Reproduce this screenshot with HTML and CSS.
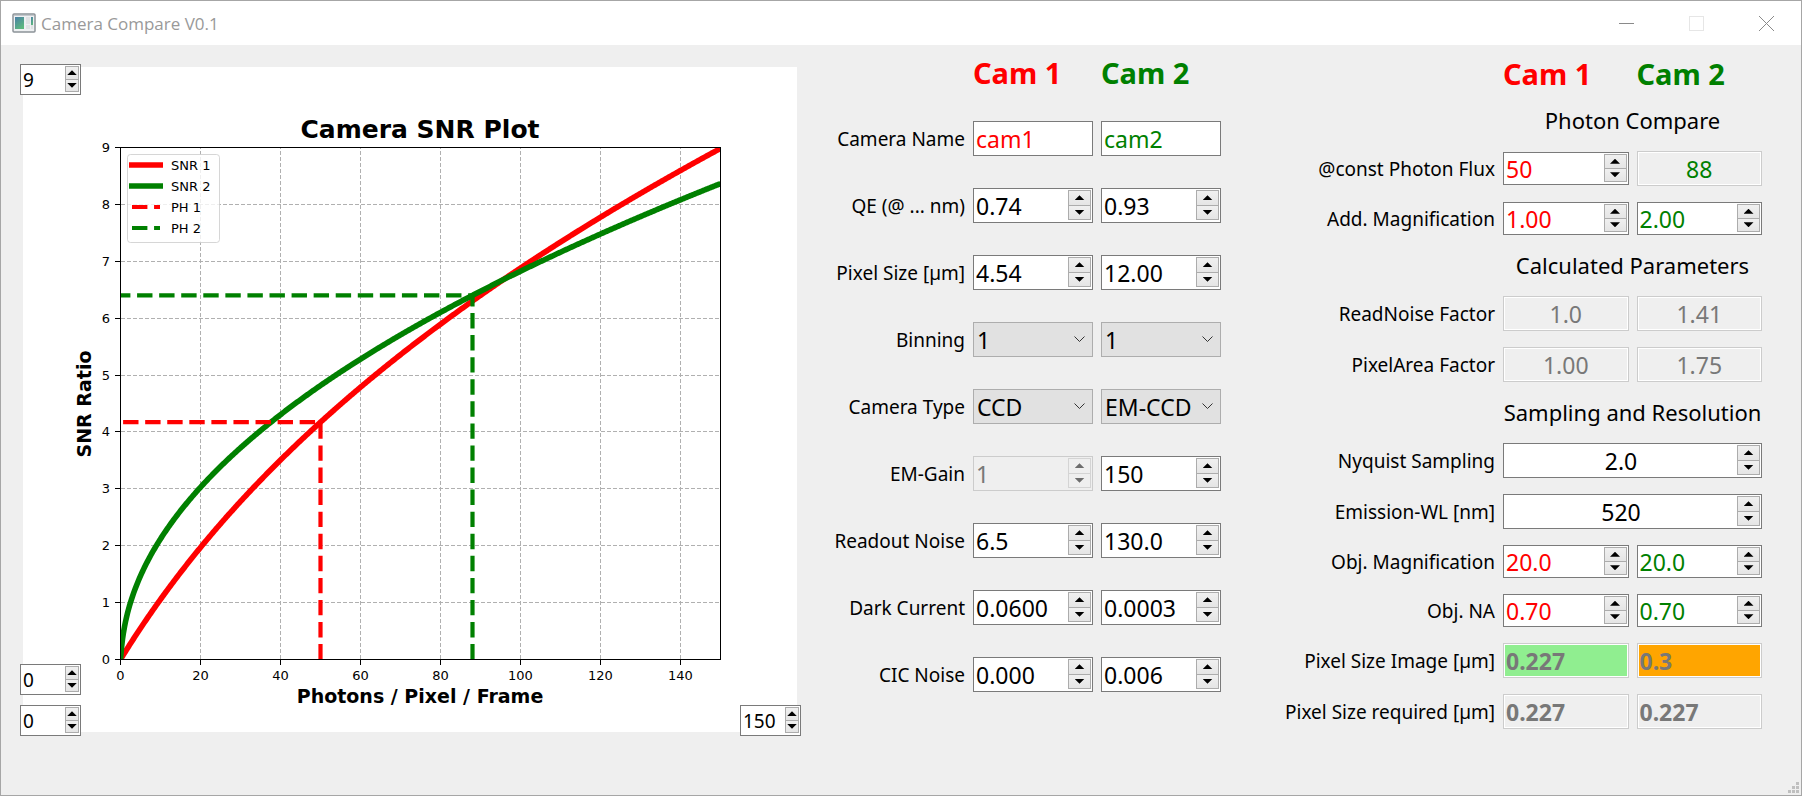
FILE: index.html
```html
<!DOCTYPE html>
<html lang="en">
<head>
<meta charset="utf-8">
<title>Camera Compare V0.1</title>
<link rel="stylesheet" href="styles.css">
</head>
<body>
<div class="window">
  <header class="titlebar">
    <svg class="app-icon" width="24" height="20" viewBox="0 0 24 20" aria-hidden="true">
      <defs><linearGradient id="pane" x1="0" y1="0" x2="0.6" y2="1"><stop offset="0" stop-color="#4a7fa8"/><stop offset="1" stop-color="#5cb87e"/></linearGradient></defs>
      <rect x="1" y="1" width="22" height="18" rx="1" fill="#eef0f2" stroke="#8c9298" stroke-width="1.5"/>
      <path d="M2 2.5h20" stroke="#c3c8cd"/>
      <rect x="3" y="4" width="9" height="12" fill="url(#pane)"/>
      <path d="M14 4h4v7h-4zM14 12h4v4h-4zM19 12h2v4h-2z" fill="#e0e2e4"/>
      <rect x="19" y="4" width="2" height="8" fill="url(#pane)"/>
    </svg>
    <h1 class="title">Camera Compare V0.1</h1>
    <div class="window-buttons">
      <button type="button" aria-label="Minimize"><svg width="15" height="15" viewBox="0 0 15 15"><path d="M0 7.5h15" stroke="#8a8a8a"/></svg></button>
      <button type="button" aria-label="Maximize" disabled><svg width="15" height="15" viewBox="0 0 15 15"><rect x="0.5" y="0.5" width="14" height="14" fill="none" stroke="#e6e6e6"/></svg></button>
      <button type="button" aria-label="Close"><svg width="15" height="15" viewBox="0 0 15 15"><path d="M0 0l15 15M15 0L0 15" stroke="#8a8a8a"/></svg></button>
    </div>
  </header>

  <main class="content">
    <section class="plot" aria-label="Camera SNR Plot">
      <svg class="chart" viewBox="0 0 774 665" role="img" aria-label="SNR ratio over photons per pixel per frame">
        <text class="chart-title" x="397" y="71">Camera SNR Plot</text>
        <g id="grid" class="grid"></g>
        <clipPath id="area"><rect x="98" y="81" width="600" height="512"/></clipPath>
        <g id="curves" clip-path="url(#area)"></g>
        <rect x="97.5" y="80.5" width="600" height="512" fill="none" stroke="#000"/>
        <g id="ticks" class="ticks"></g>
        <text class="axis-title" x="397" y="636">Photons / Pixel / Frame</text>
        <text class="axis-title" transform="translate(68 337) rotate(-90)">SNR Ratio</text>
        <g class="legend">
          <rect x="104.5" y="87.5" width="92" height="88" rx="3" fill="#fff" fill-opacity="0.8" stroke="#ccc" stroke-opacity="0.8"/>
          <path class="snr cam1-line" d="M106 98h34"/>
          <path class="snr cam2-line" d="M106 119h34"/>
          <path class="ph cam1-line" d="M109 140h28"/>
          <path class="ph cam2-line" d="M109 161h28"/>
          <text x="148" y="103">SNR 1</text>
          <text x="148" y="124">SNR 2</text>
          <text x="148" y="145">PH 1</text>
          <text x="148" y="166">PH 2</text>
        </g>
      </svg>
      <div class="spin small y-max"><input type="text" value="9" aria-label="Y maximum"><span class="steps"><button type="button" aria-label="Up"></button><button type="button" aria-label="Down"></button></span></div>
      <div class="spin small y-min"><input type="text" value="0" aria-label="Y minimum"><span class="steps"><button type="button" aria-label="Up"></button><button type="button" aria-label="Down"></button></span></div>
      <div class="spin small x-min"><input type="text" value="0" aria-label="X minimum"><span class="steps"><button type="button" aria-label="Up"></button><button type="button" aria-label="Down"></button></span></div>
      <div class="spin small x-max"><input type="text" value="150" aria-label="X maximum"><span class="steps"><button type="button" aria-label="Up"></button><button type="button" aria-label="Down"></button></span></div>
    </section>

    <form class="form camera-form">
      <h2 class="cam-head first red">Cam 1</h2><h2 class="cam-head green">Cam 2</h2>

      <label for="name1">Camera Name</label>
      <input class="field red" id="name1" type="text" value="cam1">
      <input class="field green" type="text" value="cam2" aria-label="Camera Name, Cam 2">

      <label for="qe1">QE (@ ... nm)</label>
      <div class="spin"><input id="qe1" type="text" value="0.74"><span class="steps"><button type="button" aria-label="Up"></button><button type="button" aria-label="Down"></button></span></div>
      <div class="spin"><input type="text" value="0.93" aria-label="QE, Cam 2"><span class="steps"><button type="button" aria-label="Up"></button><button type="button" aria-label="Down"></button></span></div>

      <label for="px1">Pixel Size [µm]</label>
      <div class="spin"><input id="px1" type="text" value="4.54"><span class="steps"><button type="button" aria-label="Up"></button><button type="button" aria-label="Down"></button></span></div>
      <div class="spin"><input type="text" value="12.00" aria-label="Pixel Size, Cam 2"><span class="steps"><button type="button" aria-label="Up"></button><button type="button" aria-label="Down"></button></span></div>

      <label for="bin1">Binning</label>
      <div class="combo"><select id="bin1"><option>1</option><option>2</option><option>4</option></select><svg width="11" height="7" viewBox="0 0 11 7"><path d="M0.5 0.5l5 5l5-5" /></svg></div>
      <div class="combo"><select aria-label="Binning, Cam 2"><option>1</option><option>2</option><option>4</option></select><svg width="11" height="7" viewBox="0 0 11 7"><path d="M0.5 0.5l5 5l5-5" /></svg></div>

      <label for="type1">Camera Type</label>
      <div class="combo"><select id="type1"><option>CCD</option><option>EM-CCD</option></select><svg width="11" height="7" viewBox="0 0 11 7"><path d="M0.5 0.5l5 5l5-5" /></svg></div>
      <div class="combo"><select aria-label="Camera Type, Cam 2"><option>EM-CCD</option><option>CCD</option></select><svg width="11" height="7" viewBox="0 0 11 7"><path d="M0.5 0.5l5 5l5-5" /></svg></div>

      <label for="gain1">EM-Gain</label>
      <div class="spin off"><input id="gain1" type="text" value="1" disabled><span class="steps"><button type="button" aria-label="Up" disabled></button><button type="button" aria-label="Down" disabled></button></span></div>
      <div class="spin"><input type="text" value="150" aria-label="EM-Gain, Cam 2"><span class="steps"><button type="button" aria-label="Up"></button><button type="button" aria-label="Down"></button></span></div>

      <label for="ro1">Readout Noise</label>
      <div class="spin"><input id="ro1" type="text" value="6.5"><span class="steps"><button type="button" aria-label="Up"></button><button type="button" aria-label="Down"></button></span></div>
      <div class="spin"><input type="text" value="130.0" aria-label="Readout Noise, Cam 2"><span class="steps"><button type="button" aria-label="Up"></button><button type="button" aria-label="Down"></button></span></div>

      <label for="dark1">Dark Current</label>
      <div class="spin"><input id="dark1" type="text" value="0.0600"><span class="steps"><button type="button" aria-label="Up"></button><button type="button" aria-label="Down"></button></span></div>
      <div class="spin"><input type="text" value="0.0003" aria-label="Dark Current, Cam 2"><span class="steps"><button type="button" aria-label="Up"></button><button type="button" aria-label="Down"></button></span></div>

      <label for="cic1">CIC Noise</label>
      <div class="spin"><input id="cic1" type="text" value="0.000"><span class="steps"><button type="button" aria-label="Up"></button><button type="button" aria-label="Down"></button></span></div>
      <div class="spin"><input type="text" value="0.006" aria-label="CIC Noise, Cam 2"><span class="steps"><button type="button" aria-label="Up"></button><button type="button" aria-label="Down"></button></span></div>
    </form>

    <form class="form result-form">
      <h2 class="cam-head first red">Cam 1</h2><h2 class="cam-head green">Cam 2</h2>

      <h3 class="group">Photon Compare</h3>
      <label for="flux1">@const Photon Flux</label>
      <div class="spin low red"><input id="flux1" type="text" value="50"><span class="steps"><button type="button" aria-label="Up"></button><button type="button" aria-label="Down"></button></span></div>
      <input class="field center green" type="text" value="88" disabled aria-label="Photon Flux, Cam 2">

      <label for="add1">Add. Magnification</label>
      <div class="spin low red"><input id="add1" type="text" value="1.00"><span class="steps"><button type="button" aria-label="Up"></button><button type="button" aria-label="Down"></button></span></div>
      <div class="spin low green"><input type="text" value="2.00" aria-label="Add. Magnification, Cam 2"><span class="steps"><button type="button" aria-label="Up"></button><button type="button" aria-label="Down"></button></span></div>

      <h3 class="group">Calculated Parameters</h3>
      <label for="rnf1">ReadNoise Factor</label>
      <input class="field center" id="rnf1" type="text" value="1.0" disabled>
      <input class="field center" type="text" value="1.41" disabled aria-label="ReadNoise Factor, Cam 2">

      <label for="paf1">PixelArea Factor</label>
      <input class="field center" id="paf1" type="text" value="1.00" disabled>
      <input class="field center" type="text" value="1.75" disabled aria-label="PixelArea Factor, Cam 2">

      <h3 class="group">Sampling and Resolution</h3>
      <label for="nyq">Nyquist Sampling</label>
      <div class="spin wide center"><input id="nyq" type="text" value="2.0"><span class="steps"><button type="button" aria-label="Up"></button><button type="button" aria-label="Down"></button></span></div>

      <label for="wl">Emission-WL [nm]</label>
      <div class="spin wide center"><input id="wl" type="text" value="520"><span class="steps"><button type="button" aria-label="Up"></button><button type="button" aria-label="Down"></button></span></div>

      <label for="mag1">Obj. Magnification</label>
      <div class="spin low red"><input id="mag1" type="text" value="20.0"><span class="steps"><button type="button" aria-label="Up"></button><button type="button" aria-label="Down"></button></span></div>
      <div class="spin low green"><input type="text" value="20.0" aria-label="Obj. Magnification, Cam 2"><span class="steps"><button type="button" aria-label="Up"></button><button type="button" aria-label="Down"></button></span></div>

      <label for="na1">Obj. NA</label>
      <div class="spin low red"><input id="na1" type="text" value="0.70"><span class="steps"><button type="button" aria-label="Up"></button><button type="button" aria-label="Down"></button></span></div>
      <div class="spin low green"><input type="text" value="0.70" aria-label="Obj. NA, Cam 2"><span class="steps"><button type="button" aria-label="Up"></button><button type="button" aria-label="Down"></button></span></div>

      <label for="psi1">Pixel Size Image [µm]</label>
      <input class="field bold good" id="psi1" type="text" value="0.227" disabled>
      <input class="field bold warn" type="text" value="0.3" disabled aria-label="Pixel Size Image, Cam 2">

      <label for="psr1">Pixel Size required [µm]</label>
      <input class="field bold" id="psr1" type="text" value="0.227" disabled>
      <input class="field bold" type="text" value="0.227" disabled aria-label="Pixel Size required, Cam 2">
    </form>
  </main>
  <svg class="grip" width="11" height="11" viewBox="0 0 11 11" aria-hidden="true"><path d="M8 0h3v3h-3zM4 4h3v3h-3zM8 4h3v3h-3zM0 8h3v3h-3zM4 8h3v3h-3zM8 8h3v3h-3z" fill="#bfbfbf"/></svg>
</div>
<script src="chart.js"></script>
</body>
</html>
```

FILE: styles.css
```css
* { box-sizing: border-box; }

body {
  margin: 0;
  background: #f0f0f0;
  color: #000;
  font-family: "Noto Sans", "Open Sans", sans-serif;
  font-size: 19px;
}

.window {
  position: relative;
  min-height: 100vh;
  border: 1px solid #a6a6a6;
  background: #efefef;
}

/* Title bar */
.titlebar {
  display: flex;
  align-items: center;
  height: 44px;
  padding-left: 11px;
  background: #fff;
}
.title {
  flex: 1;
  margin: 0 0 0 5px;
  color: #999;
  font-family: "Open Sans", "Noto Sans", sans-serif;
  font-size: 17px;
  font-weight: 400;
}
.window-buttons { display: flex; height: 100%; }
.window-buttons button {
  display: flex;
  align-items: center;
  justify-content: center;
  width: 70px;
  padding: 0;
  border: 0;
  background: none;
}

/* Main columns */
.content {
  display: grid;
  grid-template-columns: 774fr 424fr 541fr;
  align-items: start;
  padding: 0 39px 24px 22px;
}
.camera-form { margin-left: 33px; }
.result-form { margin-left: 59px; }

/* Plot */
.plot {
  position: relative;
  margin-top: 22px;
  background: #fff;
}
.chart {
  display: block;
  width: 100%;
  height: auto;
  font-family: "DejaVu Sans", sans-serif;
  font-size: 13px;
}
.chart-title { font-size: 25px; font-weight: 700; text-anchor: middle; }
.axis-title { font-size: 19px; font-weight: 700; text-anchor: middle; }
.grid path { fill: none; stroke: #b0b0b0; stroke-dasharray: 4 2; }
.ticks path { stroke: #000; }
.ticks .x-label { text-anchor: middle; }
.ticks .y-label { text-anchor: end; }
.snr { fill: none; stroke-width: 5.6; }
.ph { fill: none; stroke-width: 4.2; stroke-dasharray: 15.4 6.67; }
.cam1-line { stroke: #f00; }
.cam2-line { stroke: #008000; }

/* Forms */
.form {
  display: grid;
  grid-template-columns: 135px 1fr 1fr;
  align-items: center;
  gap: 32px 8px;
  padding-top: 11px;
}
.result-form {
  grid-template-columns: 215px 1fr 1fr;
  row-gap: 16px;
  padding-top: 12px;
}
.form label { text-align: right; white-space: nowrap; line-height: 26px; }
.cam-head {
  margin: 0;
  font-size: 29px;
  font-weight: 700;
  line-height: 33px;
}
.cam-head.first { grid-column: 2; }
.group {
  grid-column: 2 / 4;
  margin: 0;
  font-size: 22px;
  font-weight: 400;
  line-height: 29px;
  text-align: center;
  white-space: nowrap;
}
.red { color: #f00; }
.green { color: #008000; }

.field,
.spin {
  width: 100%;
  min-width: 0;
  height: 35px;
  border: 1px solid #7a7a7a;
  background: #fff;
}
.field,
.spin input,
.combo select {
  border-radius: 0;
  font-family: inherit;
  font-size: 23px;
}
.field { padding: 0 2px; }
.field:disabled {
  border-color: #ccc;
  background: #efefef;
  box-shadow: inset 0 0 0 1px #fff;
  color: #787878;
}
.field.green:disabled { color: #008000; }
.field.good:disabled { background: #90ee90; }
.field.warn:disabled { background: #ffa500; }
.bold { font-weight: 700; }
.center,
.center input { text-align: center; }

/* Spin boxes */
.spin { display: flex; padding: 1px; }
.spin.low { height: 33px; }
.spin.wide { grid-column: 2 / 4; }
.spin input {
  flex: 1;
  width: 0;
  min-width: 0;
  padding: 0 1px;
  border: 0;
  background: none;
  color: inherit;
}
.steps {
  display: flex;
  flex-direction: column;
  width: 23px;
  margin-bottom: 1px;
  border: 1px solid #acacac;
}
.steps button {
  display: flex;
  flex: 1;
  align-items: center;
  justify-content: center;
  padding: 0;
  border: 0;
  background: linear-gradient(#f0f0f0, #e5e5e5);
}
.steps button + button { border-top: 1px solid #acacac; }
.steps button::before {
  content: "";
  width: 10px;
  height: 5px;
  background: #000;
  clip-path: polygon(50% 0, 100% 100%, 0 100%);
}
.steps button + button::before { clip-path: polygon(0 0, 100% 0, 50% 100%); }
.spin.off { border-color: #ccc; background: #efefef; }
.spin.off input { color: #787878; }
.off .steps,
.off .steps button + button { border-color: #d4d4d4; }
.off .steps button { background: #efefef; }
.off .steps button::before { background: #6d6d6d; }

.spin.small { position: absolute; width: 61px; height: 31px; }
.small input { font-size: 19px; }
.small .steps { width: 14px; }
.y-max { top: -3px; left: -3px; }
.y-min { bottom: 37px; left: -3px; }
.x-min { bottom: -4px; left: -3px; }
.x-max { bottom: -4px; right: -4px; }

/* Combo boxes */
.combo { position: relative; }
.combo select {
  display: block;
  width: 100%;
  height: 35px;
  padding: 0 3px;
  border: 1px solid #adadad;
  background: #e1e1e1;
  color: #000;
  appearance: none;
}
.combo svg {
  position: absolute;
  top: 14px;
  right: 8px;
  fill: none;
  stroke: #333;
  pointer-events: none;
}

.grip { position: absolute; right: 2px; bottom: 2px; }
```

FILE: chart.js
```js
const NS = "http://www.w3.org/2000/svg";
const px = p => 97.5 + p * 4;
const py = s => 592.5 - s * 512 / 9;

function add(parent, tag, attrs, text) {
  const el = document.createElementNS(NS, tag);
  for (const key in attrs) el.setAttribute(key, attrs[key]);
  if (text !== undefined) el.textContent = text;
  document.getElementById(parent).appendChild(el);
}

for (let p = 0; p <= 140; p += 20) {
  if (p) add("grid", "path", { d: `M${px(p)} 592V81` });
  add("ticks", "path", { d: `M${px(p)} 593v5` });
  add("ticks", "text", { class: "x-label", x: px(p), y: 613 }, p);
}
for (let s = 0; s <= 9; s++) {
  const y = Math.floor(py(s)) + 0.5;
  if (s && s < 9) add("grid", "path", { d: `M98 ${y}H697` });
  add("ticks", "path", { d: `M97 ${y}h-5` });
  add("ticks", "text", { class: "y-label", x: 87, y: y + 4.5 }, s);
}

// Signal-to-noise ratio: excess noise factor applies to EM-CCD cameras.
const cameras = [
  { qe: 0.74, dark: 0.06, cic: 0, excess: 1, read: 6.45, photons: 50 },
  { qe: 0.93, dark: 0.0003, cic: 0.006, excess: 1.41, read: 130 / 150, photons: 88 }
];
const snr = (c, p) => c.qe * p / Math.sqrt(c.excess ** 2 * (c.qe * p + c.dark + c.cic) + c.read ** 2);

cameras.forEach((c, i) => {
  let d = `M${px(0)} ${py(0)}`;
  for (let p = 0.25; p <= 150; p += 0.25) d += `L${px(p)} ${py(snr(c, p)).toFixed(2)}`;
  add("curves", "path", { class: `snr cam${i + 1}-line`, d });
});
cameras.forEach((c, i) => {
  const d = `M${px(c.photons)} ${py(0)}V${py(snr(c, c.photons)).toFixed(2)}H${px(0)}`;
  add("curves", "path", { class: `ph cam${i + 1}-line`, d });
});
```
